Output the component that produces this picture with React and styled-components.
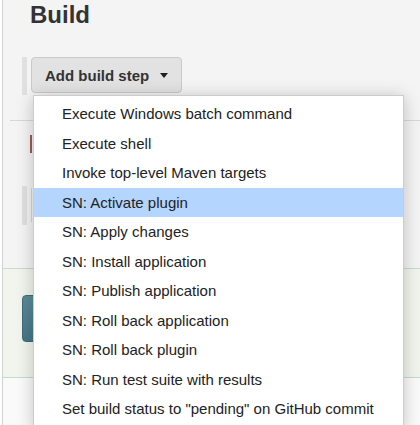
import React from "react";
import styled, { createGlobalStyle } from "styled-components";

const GlobalStyle = createGlobalStyle`
  html, body { margin: 0; padding: 0; }
  body { font-family: "Liberation Sans", Arial, sans-serif; color: #333; }
  * { box-sizing: border-box; }
`;

const Page = styled.div`
  position: relative;
  width: 420px;
  height: 425px;
  overflow: hidden;
  background: #fff;
  padding-left: 2px;
`;

const Inner = styled.div`
  height: 100%;
  border-left: 1px solid #d2d2d2;
  background: #f4f4f4;
  display: flex;
  flex-direction: column;
`;

const Title = styled.h2`
  margin: 0;
  padding: 1px 0 0 27px;
  height: 28px;
  font-size: 24px;
  line-height: 28px;
  font-weight: bold;
  color: #333;
`;

const StepRow = styled.div`
  display: flex;
  align-items: flex-start;
  gap: 4px;
  padding-left: 19px;
  margin-top: ${(p) => p.$top}px;
`;

const Stripe = styled.div`
  width: 5px;
  height: ${(p) => p.$h}px;
  background: #e0e0e0;
`;

const GhostEdge = styled.div`
  width: 1px;
  height: 34px;
  margin-top: 2px;
  background: #d6d6d6;
`;

const DropdownWrap = styled.div`
  position: relative;
`;

const AddButton = styled.button`
  display: flex;
  align-items: center;
  width: 151px;
  height: 36px;
  padding: 0 0 0 13px;
  border: 1px solid #cacaca;
  border-radius: 4px;
  background: #e2e2e2;
  font-family: "Liberation Sans", Arial, sans-serif;
  font-size: 15px;
  font-weight: bold;
  color: #333;
  white-space: nowrap;
`;

const Caret = styled.span`
  flex: none;
  margin-left: 11px;
  width: 0;
  height: 0;
  border-left: 4.5px solid transparent;
  border-right: 4.5px solid transparent;
  border-top: 5px solid #1e1e1e;
`;

const Menu = styled.ul`
  position: absolute;
  left: 2px;
  top: 38px;
  width: 371px;
  margin: 0;
  padding: 3px 0 6px;
  list-style: none;
  background: #fff;
  border: 1px solid #cccccc;
  box-shadow: 0 2px 16px rgba(0, 0, 0, 0.22);
  z-index: 10;
`;

const Item = styled.li`
  height: 29.5px;
  line-height: 29.5px;
  padding-left: 28px;
  font-size: 15px;
  color: #222;
  white-space: nowrap;
  background: ${(p) => (p.$active ? "#b4d5fe" : "transparent")};
`;

const Divider = styled.div`
  margin: 25px 0 0 7px;
  height: 1px;
  background: #d8d8d8;
`;

const ErrorMark = styled.div`
  margin: 14px 0 0 27px;
  width: 2px;
  height: 18px;
  background: #9b5c5c;
`;

const BottomBar = styled.div`
  margin-top: 43px;
  height: 110px;
  padding: 26px 0 0 19px;
  background: #f2f5ee;
  border-top: 1px solid #c3dccf;
  border-bottom: 1px solid #c3dccf;
`;

const SaveButton = styled.div`
  width: 80px;
  height: 47px;
  border-radius: 4px;
  background: linear-gradient(#5b8a98, #467687);
  border: 1px solid #3f6b7b;
`;

const Footer = styled.div`
  flex: 1;
  background: #fafafa;
`;

const items = [
  "Execute Windows batch command",
  "Execute shell",
  "Invoke top-level Maven targets",
  "SN: Activate plugin",
  "SN: Apply changes",
  "SN: Install application",
  "SN: Publish application",
  "SN: Roll back application",
  "SN: Roll back plugin",
  "SN: Run test suite with results",
  'Set build status to "pending" on GitHub commit',
];

export default function App() {
  return (
    <>
      <GlobalStyle />
      <Page>
        <Inner>
          <Title>Build</Title>
          <StepRow $top={29}>
            <Stripe $h={38} />
            <DropdownWrap>
              <AddButton>
                Add build step
                <Caret />
              </AddButton>
              <Menu>
                {items.map((t, i) => (
                  <Item key={t} $active={i === 3}>
                    {t}
                  </Item>
                ))}
              </Menu>
            </DropdownWrap>
          </StepRow>
          <Divider />
          <ErrorMark />
          <StepRow $top={33}>
            <Stripe $h={39} />
            <GhostEdge />
          </StepRow>
          <BottomBar>
            <SaveButton />
          </BottomBar>
          <Footer />
        </Inner>
      </Page>
    </>
  );
}
